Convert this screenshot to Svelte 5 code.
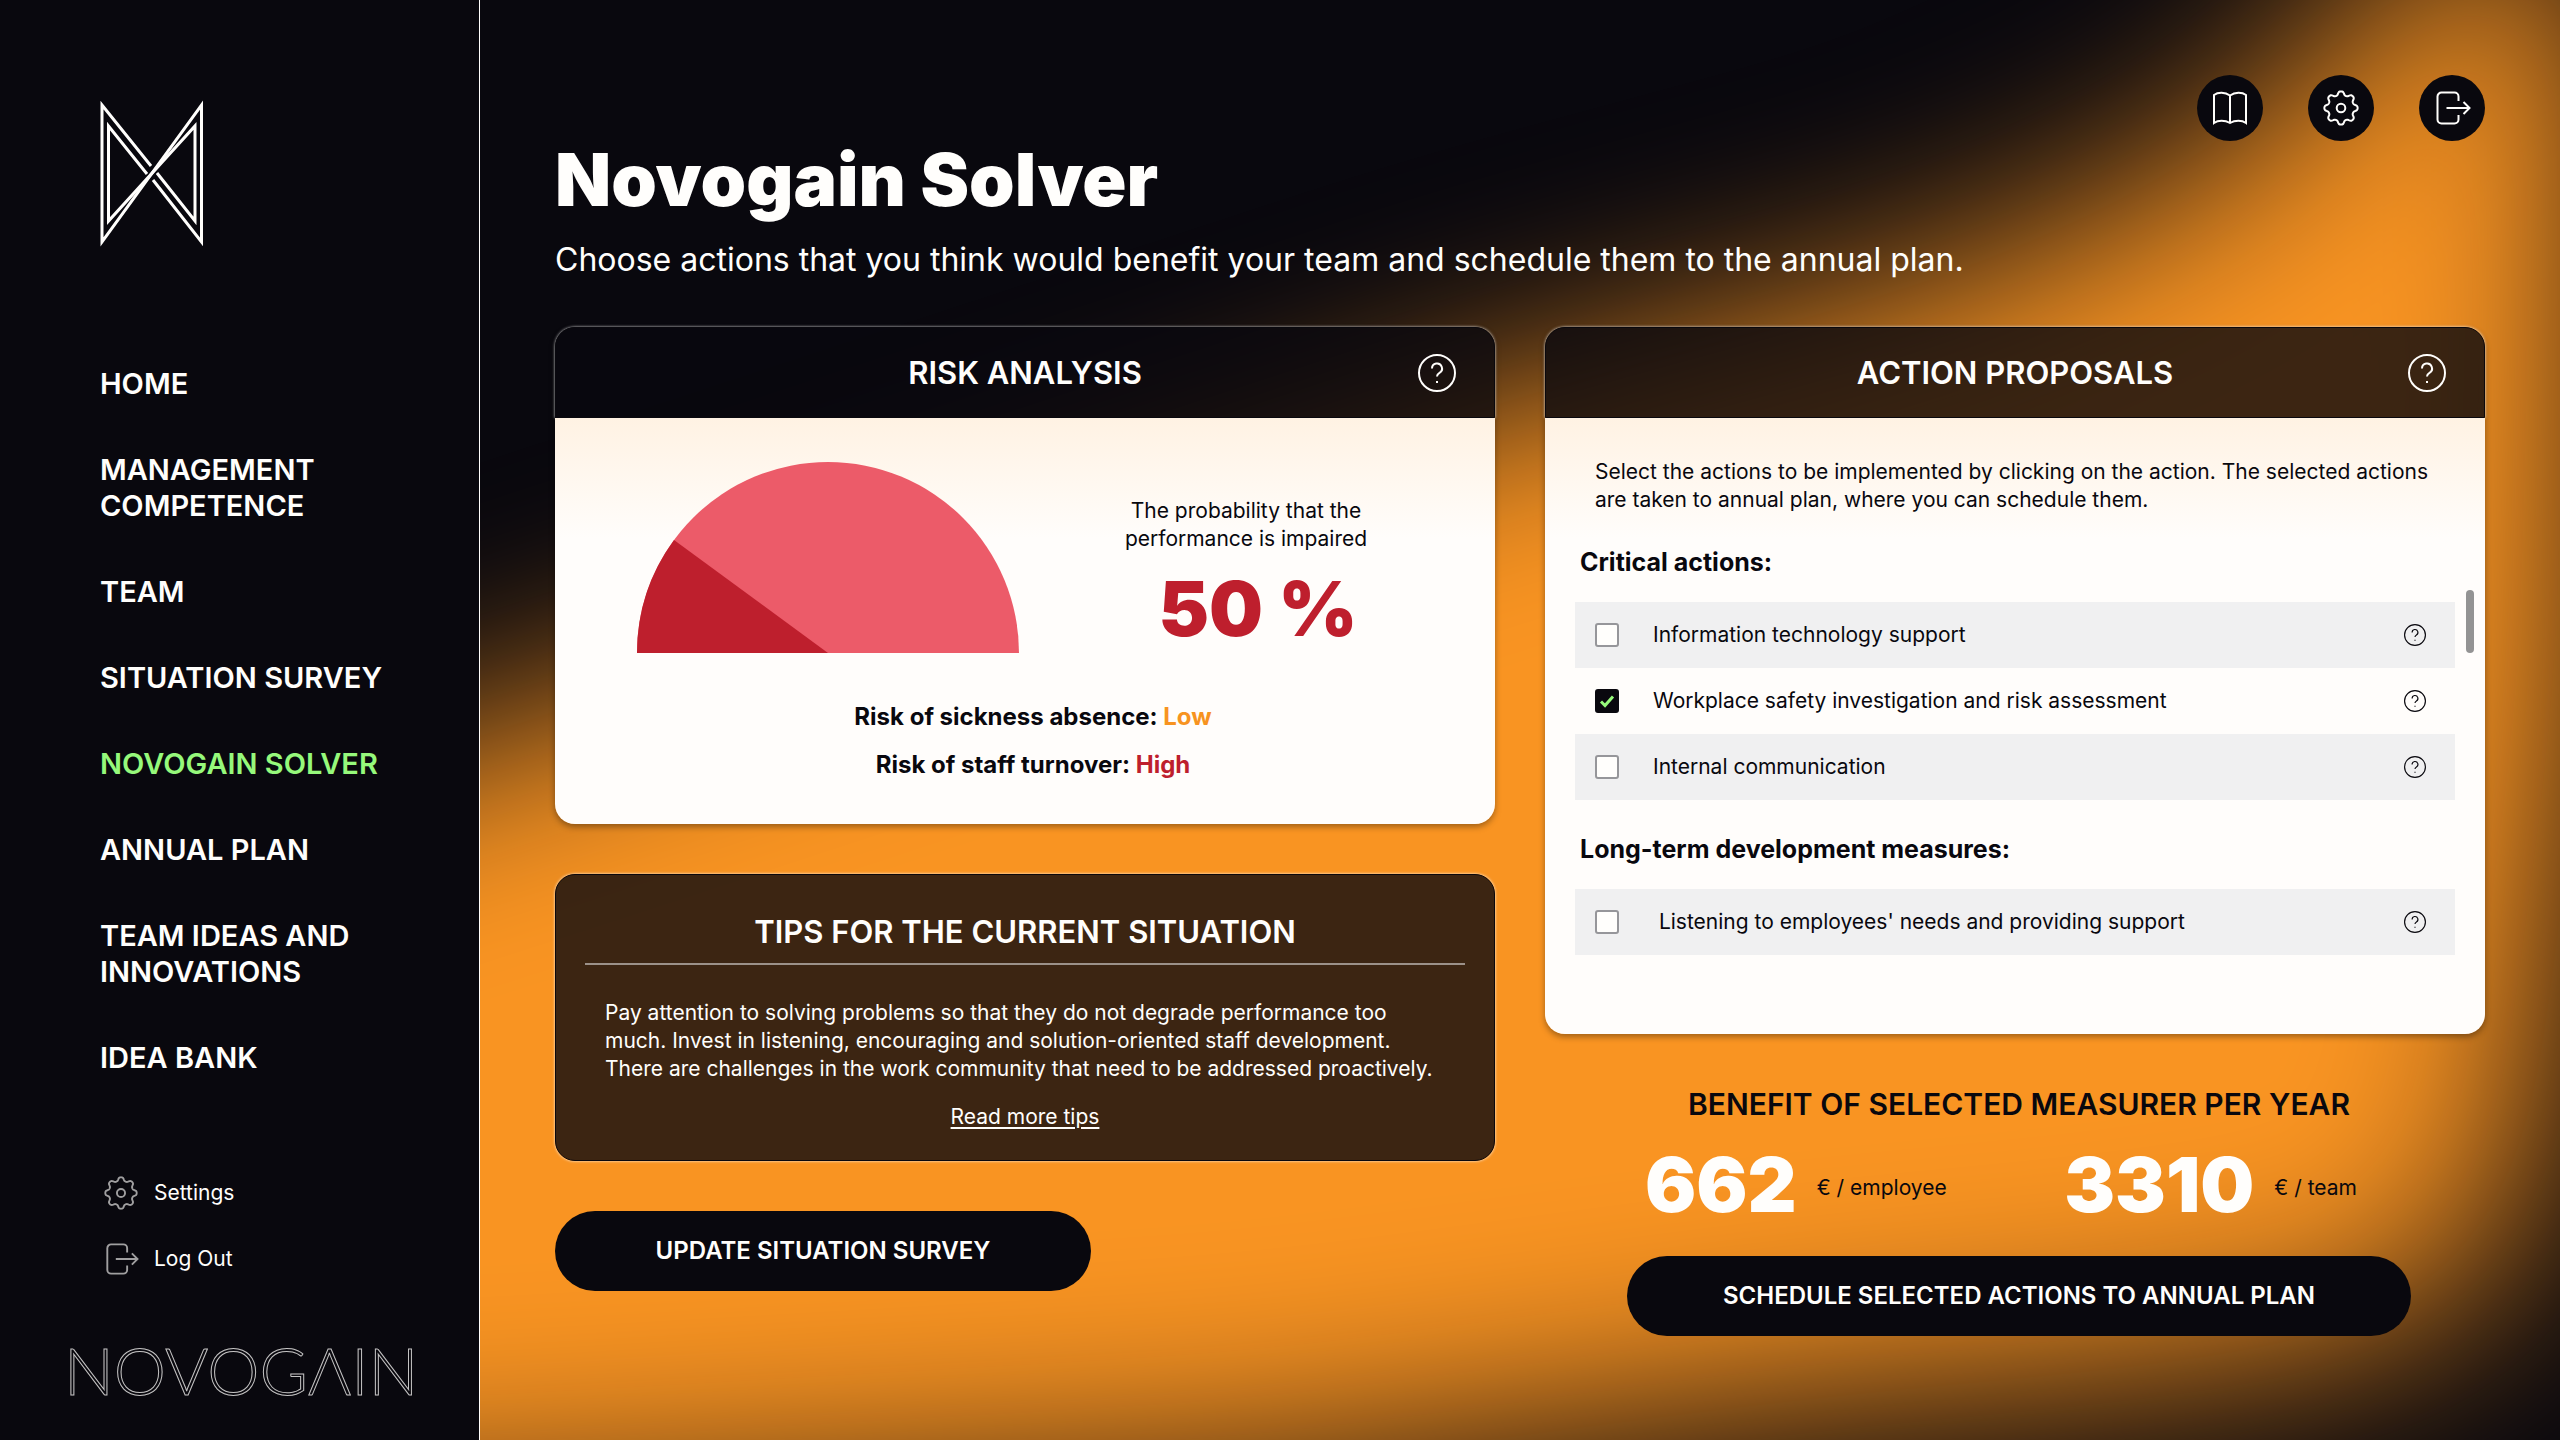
<script>
  const nav = [
    { lines: ['HOME'] },
    { lines: ['MANAGEMENT', 'COMPETENCE'] },
    { lines: ['TEAM'] },
    { lines: ['SITUATION SURVEY'] },
    { lines: ['NOVOGAIN SOLVER'], active: true },
    { lines: ['ANNUAL PLAN'] },
    { lines: ['TEAM IDEAS AND', 'INNOVATIONS'] },
    { lines: ['IDEA BANK'] }
  ];

  let groups = $state([
    {
      title: 'Critical actions:',
      items: [
        { id: 'it', label: 'Information technology support', checked: false },
        { id: 'safety', label: 'Workplace safety investigation and risk assessment', checked: true },
        { id: 'comm', label: 'Internal communication', checked: false }
      ]
    },
    {
      title: 'Long-term development measures:',
      items: [
        { id: 'needs', label: "\u00a0Listening to employees' needs and providing support", checked: false }
      ]
    }
  ]);

  // Closed outline of an eight-toothed gear centred on 18,18.
  const gear = (() => {
    const pts = [];
    for (let i = 0; i < 192; i++) {
      const a = (i / 192) * Math.PI * 2;
      const r = 14.8 + 2 * Math.tanh(1.5 * Math.cos(8 * a));
      pts.push(`${(18 + r * Math.sin(a)).toFixed(2)} ${(18 - r * Math.cos(a)).toFixed(2)}`);
    }
    return `M${pts.join('L')}Z`;
  })();
</script>

{#snippet gearIcon()}
  <svg class="icon" viewBox="0 0 36 36" aria-hidden="true">
    <path d={gear} />
    <circle cx="18" cy="18" r="4.3" />
  </svg>
{/snippet}

{#snippet exitIcon()}
  <svg class="icon" viewBox="0 0 36 36" aria-hidden="true">
    <path d="M24.5 11V6.5a4 4 0 0 0-4-4H7.500a4 4 0 0 0-4 4v23a4 4 0 0 0 4 4h13a4 4 0 0 0 4-4V25M12.500 18H36M29.500 12l6 6-6 6" />
  </svg>
{/snippet}

{#snippet helpIcon()}
  <svg class="icon" viewBox="0 0 38 38" aria-hidden="true">
    <circle cx="19" cy="19" r="18" />
    <path d="M14 14.500a5 5 0 1 1 7.500 4.300c-1.700 1-2.500 1.700-2.500 3.700" />
    <path d="M18 28h2" />
  </svg>
{/snippet}

<div class="app">
  <aside>
    <svg class="logo" viewBox="0 0 104 147" role="img" aria-label="Novogain logo">
      <path d="M53 80 101.500 142V5L2 142V5L51 66" />
      <path d="M57 73 95 121V26L8.500 121V26L47 74" />
    </svg>
    <nav aria-label="Main">
      {#each nav as item}
        <a href="#nav" class:active={item.active}>
          {#each item.lines as line}<span>{line}</span>{/each}
        </a>
      {/each}
    </nav>
    <div class="account">
      <a href="#settings">{@render gearIcon()}Settings</a>
      <a href="#logout">{@render exitIcon()}Log Out</a>
    </div>
    <div class="wordmark" aria-label="Novogain">NOVOGΛIN</div>
  </aside>

  <main>
    <svg class="glow" viewBox="0 0 2080 1440" preserveAspectRatio="none" aria-hidden="true">
      <defs>
        <filter id="soft" x="-30%" y="-30%" width="160%" height="160%" color-interpolation-filters="sRGB">
          <feGaussianBlur stdDeviation="105" />
        </filter>
      </defs>
      <path
        filter="url(#soft)"
        d="M-500 895 0 735 1037 395 1480 275 1730 160 1870 30 1980-80H2120L2120 300 2110 700 2070 1000 2045 1200 1950 1320 1700 1365 1320 1400 790 1470 0 1515-500 1540Z"
      />
    </svg>

    <header>
      <div>
        <h1>Novogain Solver</h1>
        <p>Choose actions that you think would benefit your team and schedule them to the annual plan.</p>
      </div>
      <div class="tools">
        <button aria-label="Guide">
          <svg class="icon" viewBox="0 0 36 36" aria-hidden="true">
            <path d="M18 5.500C13 2 6 2 2 5v28c4-3 11-3 16 0 5-3 12-3 16 0V5c-4-3-11-3-16 .500zM18 5.500V33" />
          </svg>
        </button>
        <button aria-label="Settings">{@render gearIcon()}</button>
        <button aria-label="Log out">{@render exitIcon()}</button>
      </div>
    </header>

    <div class="columns">
      <div class="column">
        <section class="card">
          <div class="head">
            <h2>RISK ANALYSIS</h2>
            <button class="help" aria-label="About risk analysis">{@render helpIcon()}</button>
          </div>
          <div class="body risk">
            <div class="summary">
              <svg class="gauge" viewBox="0 0 382 192" role="img" aria-label="Impairment gauge">
                <path fill="#ec5b69" d="M0 192a191 191 0 0 1 382 0z" />
                <path fill="#be1f2d" d="M0 192A191 191 0 0 1 37 79L191 192z" />
              </svg>
              <div class="chance">
                <p>The probability that the<br />performance is impaired</p>
                <strong>50 %</strong>
              </div>
            </div>
            <p class="level">Risk of sickness absence: <span class="low">Low</span></p>
            <p class="level">Risk of staff turnover: <span class="high">High</span></p>
          </div>
        </section>

        <section class="tips">
          <h2>TIPS FOR THE CURRENT SITUATION</h2>
          <p>
            Pay attention to solving problems so that they do not degrade performance too<br />
            much. Invest in listening, encouraging and solution-oriented staff development.<br />
            There are challenges in the work community that need to be addressed proactively.
          </p>
          <a href="#tips">Read more tips</a>
        </section>

        <button class="pill update">UPDATE SITUATION SURVEY</button>
      </div>

      <div class="column">
        <section class="card">
          <div class="head">
            <h2>ACTION PROPOSALS</h2>
            <button class="help" aria-label="About action proposals">{@render helpIcon()}</button>
          </div>
          <div class="body actions">
            <p class="intro">
              Select the actions to be implemented by clicking on the action. The selected actions<br />
              are taken to annual plan, where you can schedule them.
            </p>
            {#each groups as group}
              <h3>{group.title}</h3>
              <ul>
                {#each group.items as item}
                  <li>
                    <span class="check">
                      <input type="checkbox" id={item.id} bind:checked={item.checked} />
                      <svg viewBox="0 0 24 24" aria-hidden="true"><path d="M6 12.500l4 4 8-9" /></svg>
                    </span>
                    <label for={item.id}>{item.label}</label>
                    <button class="help small" aria-label={`About ${item.label}`}>{@render helpIcon()}</button>
                  </li>
                {/each}
              </ul>
            {/each}
            <div class="thumb"></div>
          </div>
        </section>

        <section class="benefit">
          <h2>BENEFIT OF SELECTED MEASURER PER YEAR</h2>
          <div class="figures">
            <p><strong>662</strong><span>€ / employee</span></p>
            <p><strong>3310</strong><span>€ / team</span></p>
          </div>
          <button class="pill schedule">SCHEDULE SELECTED ACTIONS TO ANNUAL PLAN</button>
        </section>
      </div>
    </div>
  </main>
</div>

<style>
  :global(body) {
    margin: 0;
    background: #09080e;
  }
  .app {
    display: grid;
    grid-template-columns: 480px minmax(0, 1fr);
    min-height: 100vh;
    background: #09080e;
    color: #fffefc;
    font-family: Inter, 'Liberation Sans', sans-serif;
    font-size: 21px;
    line-height: 28px;
  }
  h1,
  h2,
  h3,
  p,
  ul {
    margin: 0;
    padding: 0;
  }
  a {
    color: inherit;
    text-decoration: none;
  }
  button {
    padding: 0;
    border: 0;
    background: none;
    color: inherit;
    font: inherit;
    cursor: pointer;
  }
  .icon {
    display: block;
    width: 36px;
    height: 36px;
    fill: none;
    stroke: currentColor;
    stroke-width: 2;
    overflow: visible;
  }

  aside {
    display: flex;
    flex-direction: column;
    box-sizing: border-box;
    padding: 100px 0 38px 100px;
    border-right: 1px solid #fffefc;
  }
  .logo {
    width: 104px;
    height: 147px;
    fill: none;
    stroke: #fffefc;
    stroke-width: 3;
    overflow: visible;
    stroke-miterlimit: 8;
  }
  nav {
    display: grid;
    gap: 50px;
    margin-top: 119px;
    font-size: 29px;
    font-weight: 600;
    line-height: 36px;
  }
  nav span {
    display: block;
  }
  nav .active {
    color: #96f97b;
  }
  .account {
    display: grid;
    gap: 32px;
    margin-top: 100px;
  }
  .account a {
    display: flex;
    align-items: center;
    gap: 16px;
    height: 34px;
    padding-left: 4px;
  }
  .account .icon {
    width: 34px;
    height: 34px;
    color: #a09fa0;
  }
  .wordmark {
    margin: auto 0 0 -36px;
    color: #09080e;
    font-family: Lato, sans-serif;
    font-size: 66px;
    font-weight: 300;
    line-height: 64px;
    -webkit-text-stroke: 1px #c4c3c3;
  }

  main {
    position: relative;
    padding: 75px 75px 100px;
    overflow: hidden;
  }
  .glow {
    position: absolute;
    inset: 0;
    width: 100%;
    height: 100%;
    fill: #f99422;
  }
  header,
  .columns {
    position: relative;
  }
  header {
    display: flex;
    justify-content: space-between;
    align-items: flex-start;
    margin-bottom: 47px;
  }
  h1 {
    padding-top: 69px;
    font-size: 73px;
    font-weight: 900;
    line-height: 72px;
  }
  header p {
    padding-top: 24px;
    font-size: 32px;
    line-height: 40px;
  }
  .tools {
    display: flex;
    gap: 45px;
  }
  .tools button {
    display: grid;
    place-items: center;
    width: 66px;
    height: 66px;
    border-radius: 50%;
    background: #09080e;
  }
  .columns {
    display: grid;
    grid-template-columns: repeat(2, minmax(0, 1fr));
    gap: 50px;
  }
  .column {
    display: flex;
    flex-direction: column;
    align-items: stretch;
  }
  h2 {
    font-size: 31px;
    font-weight: 600;
    line-height: 40px;
    text-align: center;
  }
  .card {
    border-radius: 20px;
    box-shadow: 0 3px 6px rgb(0 0 0 / 35%);
  }
  .head,
  .tips {
    border: 1px solid #09080e;
    background: rgb(9 8 14 / 79%);
    box-shadow: 0 0 3px rgb(255 255 255 / 90%);
  }
  .head {
    display: grid;
    grid-template-columns: 38px 1fr 38px;
    align-items: center;
    box-sizing: border-box;
    height: 91px;
    padding: 0 38px;
    border-radius: 20px 20px 0 0;
  }
  .head h2 {
    grid-column: 2;
  }
  .help .icon {
    width: 38px;
    height: 38px;
  }
  .help.small .icon {
    width: 22px;
    height: 22px;
  }
  .body {
    position: relative;
    border-radius: 0 0 20px 20px;
    background: linear-gradient(#fff2e3, #fffdfb 120px);
    color: #09080e;
  }

  .risk {
    padding: 43px 82px 35px;
    text-align: center;
  }
  .summary {
    display: flex;
    justify-content: space-between;
    margin-bottom: 40px;
  }
  .gauge {
    width: 382px;
    height: 192px;
  }
  .chance {
    width: 334px;
    padding-top: 36px;
  }
  strong {
    display: block;
    font-size: 76px;
    font-weight: 900;
    line-height: 80px;
  }
  .chance strong {
    margin-top: 15px;
    padding-left: 24px;
    color: #be1f2d;
  }
  .level {
    padding-left: 16px;
    font-size: 24px;
    font-weight: 700;
    line-height: 48px;
  }
  .low {
    color: #f79320;
  }
  .high {
    color: #be1f2d;
  }

  .tips {
    margin-top: 50px;
    padding: 37px 29px 29px;
    border-radius: 20px;
    text-align: center;
  }
  .tips h2 {
    padding-bottom: 11px;
    border-bottom: 2px solid #9c9189;
  }
  .tips p {
    margin: 34px 0 20px 20px;
    text-align: left;
    white-space: nowrap;
  }
  .tips a {
    text-decoration: underline;
    text-underline-offset: 3px;
  }
  .pill {
    height: 80px;
    border-radius: 40px;
    background: #09080e;
    font-size: 24px;
    font-weight: 600;
  }
  .update {
    width: 536px;
    margin-top: 50px;
  }

  .actions {
    padding: 40px 30px 79px;
  }
  .intro {
    margin: 0 0 32px 20px;
    white-space: nowrap;
  }
  h3 {
    margin-left: 5px;
    font-size: 25px;
    font-weight: 700;
    line-height: 32px;
  }
  ul {
    list-style: none;
  }
  h3 + ul {
    margin-top: 24px;
  }
  ul + h3 {
    margin-top: 33px;
  }
  li {
    display: flex;
    align-items: center;
    height: 66px;
    padding: 0 29px 0 20px;
  }
  li:nth-child(odd) {
    background: #f0f0f1;
  }
  .check {
    display: grid;
    width: 24px;
    height: 24px;
    margin-right: 34px;
  }
  .check > * {
    grid-area: 1 / 1;
  }
  .check input {
    appearance: none;
    box-sizing: border-box;
    width: 24px;
    height: 24px;
    margin: 0;
    border: 2px solid #96969a;
    border-radius: 3px;
    background: #fffefc;
  }
  .check input:checked {
    border-color: #09080e;
    background: #09080e;
  }
  .check svg {
    fill: none;
    stroke: #96f97b;
    stroke-width: 3;
    pointer-events: none;
    visibility: hidden;
  }
  .check input:checked + svg {
    visibility: visible;
  }
  label {
    flex: 1;
  }
  .thumb {
    position: absolute;
    top: 172px;
    right: 11px;
    width: 8px;
    height: 63px;
    border-radius: 4px;
    background: #939393;
  }

  .benefit {
    display: flex;
    flex-direction: column;
    align-items: center;
    padding: 50px 0 0 8px;
    color: #09080e;
  }
  .benefit h2 {
    font-size: 30px;
  }
  .figures {
    display: flex;
    align-items: center;
    justify-content: space-between;
    width: 712px;
    margin: 20px 36px 32px 0;
  }
  .figures p {
    display: flex;
    align-items: center;
    gap: 20px;
  }
  .figures span {
    padding-top: 8px;
  }
  .figures strong {
    color: #fffefc;
  }
  .schedule {
    width: 784px;
    color: #fffefc;
  }
</style>
